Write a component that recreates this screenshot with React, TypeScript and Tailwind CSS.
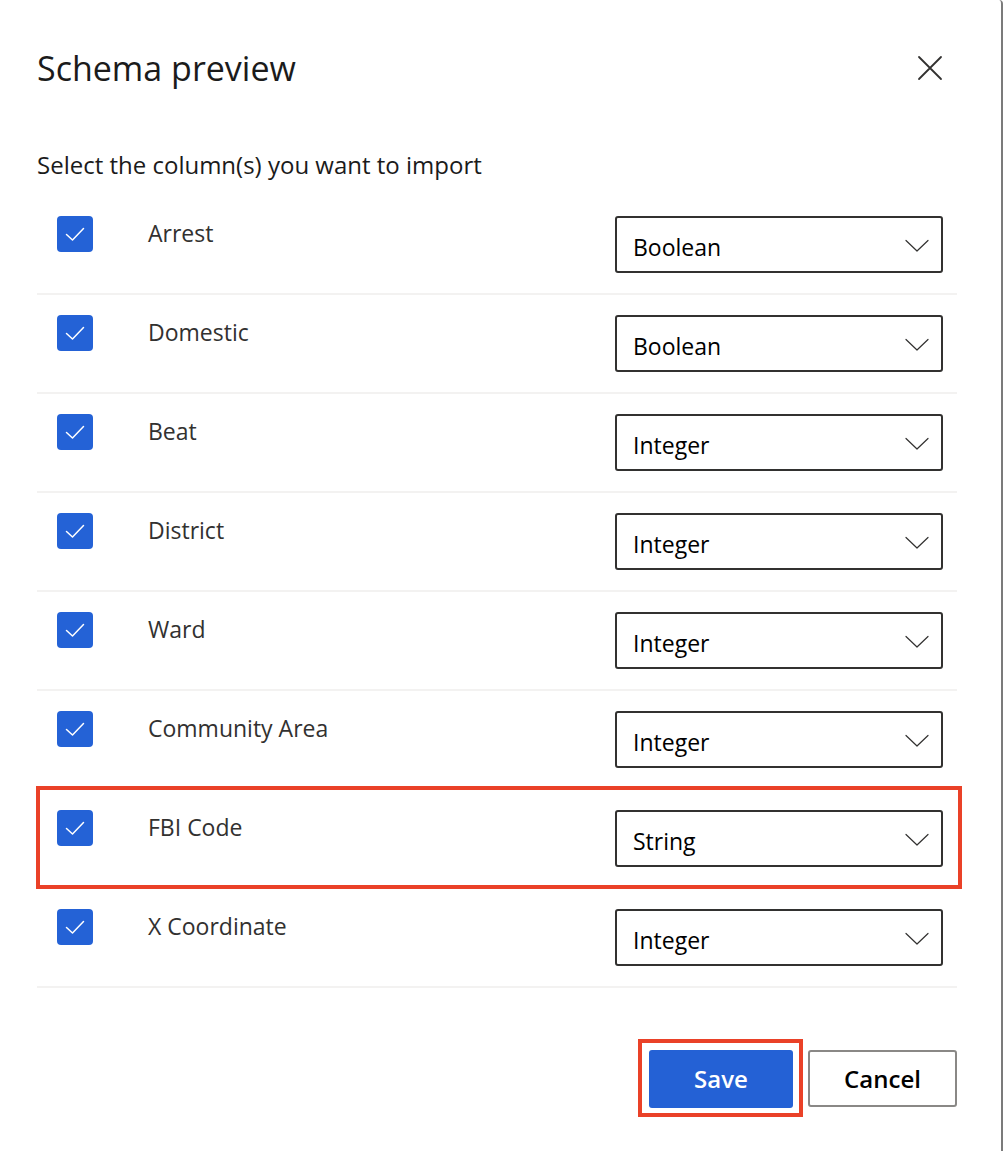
import React from 'react';

const rows = [
  { name: 'Arrest', type: 'Boolean' },
  { name: 'Domestic', type: 'Boolean' },
  { name: 'Beat', type: 'Integer' },
  { name: 'District', type: 'Integer' },
  { name: 'Ward', type: 'Integer' },
  { name: 'Community Area', type: 'Integer' },
  { name: 'FBI Code', type: 'String', marked: true },
  { name: 'X Coordinate', type: 'Integer' },
];

const Check = () => (
  <div className="w-[36px] h-[36px] rounded-[4px] bg-[#2462d6] flex items-center justify-center shrink-0">
    <svg width="24" height="24" viewBox="0 0 24 24" fill="none">
      <path d="M3.5 12.5 L9.5 18 L20.5 6.5" stroke="white" strokeWidth="1.5" strokeLinecap="round" strokeLinejoin="round" />
    </svg>
  </div>
);

const Chevron = () => (
  <svg width="24" height="14" viewBox="0 0 24 14" fill="none">
    <path d="M1 1.5 L12 12 L23 1.5" stroke="#323130" strokeWidth="1.2" strokeLinecap="round" strokeLinejoin="round" />
  </svg>
);

const Row = ({ name, type, marked }: { name: string; type: string; marked?: boolean }) => (
  <div className="relative flex items-start h-[99px] pt-[20px] border-b-2 border-[#f3f2f1]">
    <div className="ml-[20px]">
      <Check />
    </div>
    <div className="ml-[55px] mt-[2px] text-[23px] leading-[30px] text-[#323130]">{name}</div>
    <div className="ml-auto mr-[14px] w-[328px] h-[57px] border-2 border-[#323130] rounded-[3px] flex items-center pl-[16px] pr-[12px] pt-[5px]">
      <span className="text-[23px] text-black leading-[30px]">{type}</span>
      <span className="ml-auto -mt-[3px]">
        <Chevron />
      </span>
    </div>
    {marked && (
      <div className="absolute -top-[4px] -left-[1px] w-[926px] h-[103px] border-4 border-[#ea4128] pointer-events-none" />
    )}
  </div>
);

export default function App() {
  return (
    <div className="w-[1003px] h-[1151px] bg-white" style={{ fontFamily: '"Open Sans", "Noto Sans", sans-serif' }}>
      <div className="w-[1003px] h-[1151px] border-r-2 border-[#7b7b7b] rounded-tr-[4px] pl-[37px] pr-[44px]">
        <div className="flex items-center justify-between pt-[44px]">
          <h1 className="text-[34px] leading-[48px] text-[#1b1b1b] font-normal">Schema preview</h1>
          <svg width="26" height="26" viewBox="0 0 26 26" fill="none" className="mr-[14px]">
            <path d="M2 2 L24 24 M24 2 L2 24" stroke="#323130" strokeWidth="1.8" strokeLinecap="round" />
          </svg>
        </div>
        <p className="mt-[56px] text-[24px] leading-[34px] text-[#1b1b1b]">Select the column(s) you want to import</p>
        <div className="mt-[14px]">
          {rows.map((r) => (
            <Row key={r.name} {...r} />
          ))}
        </div>
        <div className="flex justify-end items-start mt-[51px]">
          <div className="border-4 border-[#ea4128] pt-[7px] pl-[7px] pr-[6px] pb-[5px]">
            <button className="w-[144px] h-[58px] rounded-[3px] bg-[#2461d5] text-white text-[24px] font-semibold">
              Save
            </button>
          </div>
          <button className="ml-[5px] mt-[11px] w-[149px] h-[57px] rounded-[3px] border-2 border-[#8a8886] bg-white text-black text-[24px] font-semibold">
            Cancel
          </button>
        </div>
      </div>
    </div>
  );
}
